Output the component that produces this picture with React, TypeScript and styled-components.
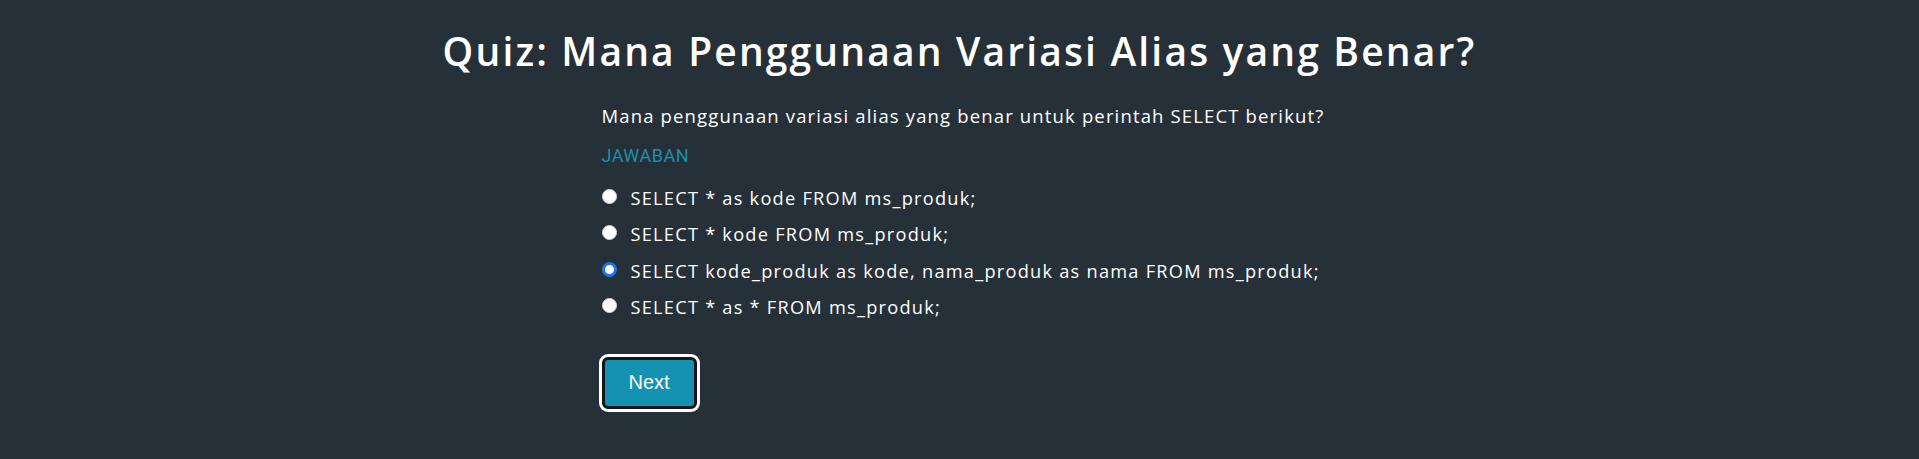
import React, { useState } from 'react';
import styled, { createGlobalStyle } from 'styled-components';

const GlobalStyle = createGlobalStyle`
  html, body {
    margin: 0;
    padding: 0;
    background-color: #263038;
  }
  body {
    font-family: "Open Sans", "Liberation Sans", sans-serif;
    color: #fff;
  }
`;

const Page = styled.div`
  min-height: 459px;
  background-color: #263038;
  padding-top: 27px;
  box-sizing: border-box;
`;

const Title = styled.h1`
  margin: 0;
  text-align: center;
  font-size: 39px;
  line-height: 48px;
  font-weight: 600;
  letter-spacing: 2.15px;
  color: #fff;
`;

const Quiz = styled.section`
  width: 716px;
  margin: 0 auto;
  padding-top: 29px;
`;

const Question = styled.p`
  margin: 0;
  font-size: 18.5px;
  line-height: 24px;
  letter-spacing: 1.15px;
  white-space: nowrap;
`;

const AnswerLabel = styled.div`
  margin-top: 16px;
  font-family: Roboto, "Liberation Sans", sans-serif;
  font-size: 18px;
  line-height: 24px;
  letter-spacing: 0.5px;
  color: #1a8fae;
`;

const OptionList = styled.div`
  display: flex;
  flex-direction: column;
  gap: 12.3px;
  margin-top: 18px;
`;

const Option = styled.label`
  display: flex;
  align-items: center;
  gap: 14px;
  font-size: 18.2px;
  line-height: 24px;
  letter-spacing: 1.25px;
  white-space: nowrap;
  cursor: pointer;
`;

const Radio = styled.input`
  appearance: none;
  flex: none;
  width: 15px;
  height: 15px;
  margin: -3px 0 0 0;
  border-radius: 50%;
  background: #fff;
  border: 1px solid #d6d6d6;
  box-sizing: border-box;

  &:checked {
    border: 3.5px solid #1f74ee;
  }
`;

const NextButton = styled.button`
  margin-top: 38px;
  width: 95px;
  height: 52px;
  box-sizing: border-box;
  border: 3px solid #131619;
  border-radius: 6px;
  box-shadow: 0 0 0 3px #fff;
  background-color: #1591b1;
  color: #fff;
  font-family: "Liberation Sans", Arial, sans-serif;
  font-size: 20px;
  cursor: pointer;
`;

const options = [
  'SELECT * as kode FROM ms_produk;',
  'SELECT * kode FROM ms_produk;',
  'SELECT kode_produk as kode, nama_produk as nama FROM ms_produk;',
  'SELECT * as * FROM ms_produk;',
];

const App: React.FC = () => {
  const [selected, setSelected] = useState(2);

  return (
    <Page>
      <GlobalStyle />
      <Title>Quiz: Mana Penggunaan Variasi Alias yang Benar?</Title>
      <Quiz>
        <Question>Mana penggunaan variasi alias yang benar untuk perintah SELECT berikut?</Question>
        <AnswerLabel>JAWABAN</AnswerLabel>
        <OptionList>
          {options.map((text, i) => (
            <Option key={i}>
              <Radio
                type="radio"
                name="jawaban"
                checked={selected === i}
                onChange={() => setSelected(i)}
              />
              {text}
            </Option>
          ))}
        </OptionList>
        <NextButton>Next</NextButton>
      </Quiz>
    </Page>
  );
};

export default App;
